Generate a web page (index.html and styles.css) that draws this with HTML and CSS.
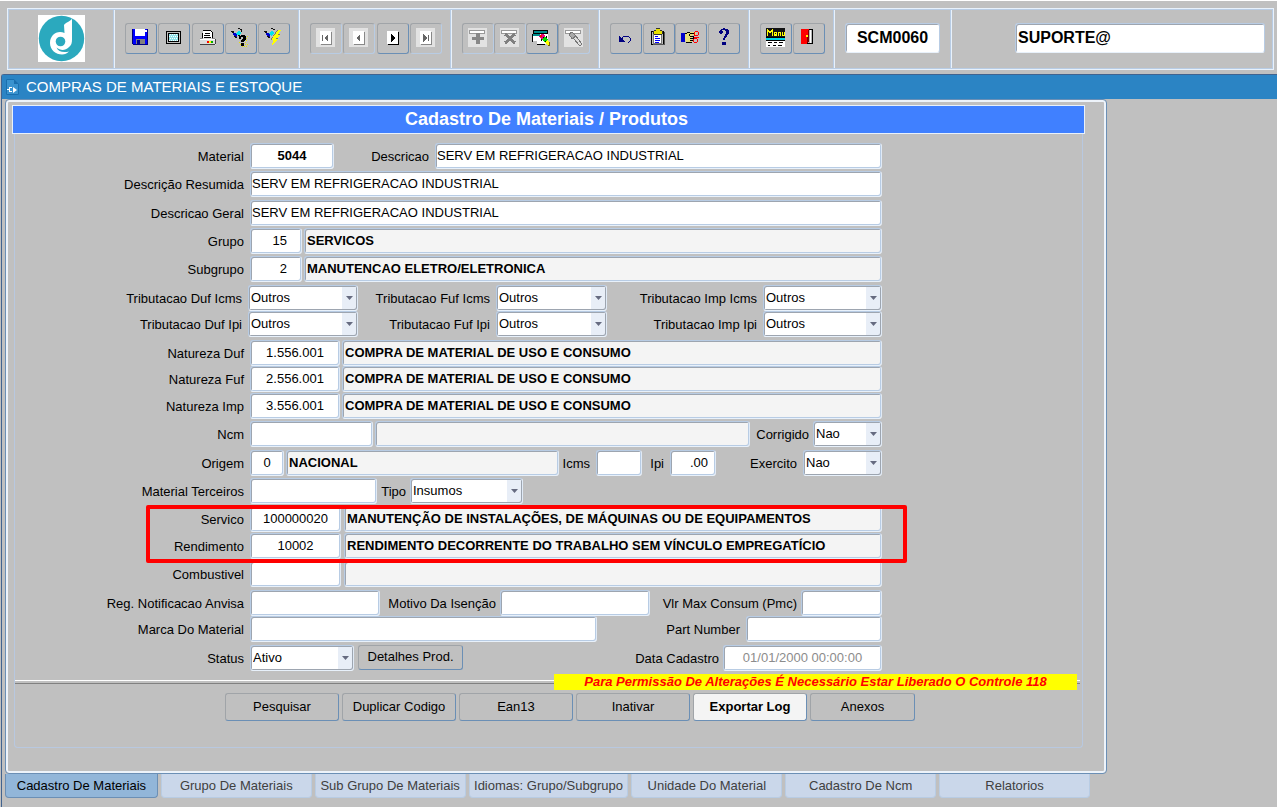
FILE: index.html
```
<!DOCTYPE html>
<html lang="pt-BR">
<head>
<meta charset="utf-8">
<title>Compras de Materiais e Estoque</title>
<link rel="stylesheet" href="styles.css">
</head>
<body>
<header class="toolbar">
  <div class="tool-group tool-group--logo">
    <svg class="logo" viewBox="0 0 47 47" role="img" aria-label="Logo">
      <rect width="47" height="47" fill="#fff"/>
      <circle cx="23.500" cy="23.500" r="22.700" fill="#2ba9be"/>
      <path d="M34 3.500C32 7 28 7 26 10l.500 8C19 15 12 20 12 28c0 7 6 11.500 12 11.500 3 0 5-1 7-3-6 1.500-11 0-12.500-4 4 3.500 9 3 12 0 3-2 3.500-5 3.500-8z" fill="#fff"/>
      <circle cx="22.500" cy="26.500" r="4.800" fill="#2ba9be"/>
    </svg>
  </div>
  <div class="tool-group tool-group--main">
    <button class="tool" type="button" aria-label="Salvar"><svg viewBox="0 0 20 20"><path d="M1 1h16v16H2l-1-1z" fill="#00f"/><path d="M1 1h1v15H1zM16 1h1v16h-1zM2 16h15v1H2z" fill="#000080"/><path d="M4 1h10v7H4z" fill="#fff"/><path d="M5 11h9v5H5z" fill="#808080"/><path d="M6 12h3v4H6z" fill="#000090"/><path d="M14 2h2v2h-2z" fill="#fff"/></svg></button>
    <button class="tool" type="button" aria-label="Tela"><svg viewBox="0 0 20 20"><rect x="2.500" y="3.500" width="14" height="12" rx="1" fill="#c0c0c0" stroke="#000"/><rect x="4.500" y="5.500" width="10" height="8" fill="#c0c0c0" stroke="#000"/><path d="M5 6h9v7H5z" fill="#8fe3ea"/><path d="M6 6.500h1m1 0h1m1 0h1m1 0h1M5 8.500h1m1 0h1m1 0h1m1 0h1m1 0h1M6 10.500h1m1 0h1m1 0h1m1 0h1M5 12.500h1m1 0h1m1 0h1m1 0h1m1 0h1" stroke="#fff"/></svg></button>
    <button class="tool" type="button" aria-label="Imprimir"><svg viewBox="0 0 20 20"><path d="M5 3h9l1 2v6H5z" fill="#fff"/><path d="M4 5h1v6H4zM5 2h8v1H5zM13 3h1v1h-1zM14 4h1v7h-1z"/><path d="M7 5h5v1H7zM6 7h6v1H6zM6 9h7v1H6z"/><path d="M3 10h14v1h1v6H2v-6h1z" fill="#ddd"/><path d="M2 10h3v1H2zM14 10h3v1h-3z" fill="#888"/><path d="M2 11h15v1H2z" fill="#fff"/><path d="M2 16h15v1H2zM17 11h1v5h-1z" fill="#444"/><path d="M9 13h2v2H9z" fill="#f00"/><path d="M11 13h2v2h-2z" fill="#ff0"/><path d="M13 13h2v2h-2z" fill="#0a0"/></svg></button>
    <button class="tool" type="button" aria-label="Entrar consulta"><svg viewBox="0 0 20 20"><path d="M1 4h1l4 2v4H5L3 8z" fill="#00c"/><path d="M5 5l3-3 2 3-3 3z" fill="#00e5ee"/><path d="M0 3h3v1H0zM1 4h2v1H1zM3 8h2v1H3zM4 9h2v1H4zM7 0h2v1H7zM9 1h2v1H9zM10 2h1v2h-1zM7 7h2v1H7z" fill="#111"/><path d="M10 8.500h1m1 0h1m1 0h1m1 0h1M9 10.500h1m5 0h1M10 12.500h1m4 0h1M8 14.500h1m5 0h1M9 16.500h1m4 0h1m1 0h1M11 18.500h1m1 0h1m1 0h1" stroke="#e8e200"/><path d="M8 8h2V7h4v1h1v4h-1v1h-1v1h-3v-2h1v-1h1V9h-2v2H8zM10 15h3v3h-3z"/></svg></button>
    <button class="tool" type="button" aria-label="Executar consulta"><svg viewBox="0 0 20 20"><path d="M1 4h1l4 2v4H5L3 8z" fill="#00c"/><path d="M5 5l3-3 2 3-3 3z" fill="#00e5ee"/><path d="M0 3h3v1H0zM1 4h2v1H1zM3 8h2v1H3zM4 9h2v1H4zM7 0h2v1H7zM9 1h2v1H9z" fill="#111"/><path d="M13 2h4l-3 5h2l-4 4h2l-6 7 1-6H7l2-4h1z" fill="#ff0"/><path d="M13 2h1l-4 6H9zM8 9h1l-1 3H7zM14 6h2v1h-2zM12 10h2v1h-2z" fill="#777"/></svg></button>
  </div>
  <div class="tool-group tool-group--nav">
    <button class="tool tool--off" type="button" disabled aria-label="Primeiro"><svg viewBox="0 0 20 20"><path d="M0 0h19v19H0z" fill="#e2e2e2"/><path d="M5 4h11v13H5z" fill="#888"/><path d="M4 3h11v13H4z" fill="#fff"/><path d="M6 7h1v6H6zM12 6v8L8 10z" fill="#666"/></svg></button>
    <button class="tool tool--off" type="button" disabled aria-label="Anterior"><svg viewBox="0 0 20 20"><path d="M0 0h19v19H0z" fill="#e2e2e2"/><path d="M5 4h11v13H5z" fill="#888"/><path d="M4 3h11v13H4z" fill="#fff"/><path d="M11 6v8l-4-4z" fill="#666"/></svg></button>
    <button class="tool" type="button" aria-label="Próximo"><svg viewBox="0 0 20 20"><path d="M5 4h11v13H5z"/><path d="M4 3h11v13H4z" fill="#fff"/><path d="M8 5v9l4-4z"/></svg></button>
    <button class="tool tool--off" type="button" disabled aria-label="Último"><svg viewBox="0 0 20 20"><path d="M0 0h19v19H0z" fill="#e2e2e2"/><path d="M5 4h11v13H5z" fill="#888"/><path d="M4 3h11v13H4z" fill="#fff"/><path d="M7 6v8l4-4zM12 7h1v6h-1z" fill="#666"/></svg></button>
  </div>
  <div class="tool-group tool-group--edit">
    <button class="tool tool--off" type="button" disabled aria-label="Inserir"><svg viewBox="0 0 20 20"><path d="M0 0h19v19H0z" fill="#e2e2e2"/><path d="M1.500 2.500h15v3h-15z" fill="#fff" stroke="#999"/><path d="M8 5h4v4h4v3h-4v4H8v-4H4V9h4z" fill="#888"/></svg></button>
    <button class="tool tool--off" type="button" disabled aria-label="Remover"><svg viewBox="0 0 20 20"><path d="M0 0h19v19H0z" fill="#e2e2e2"/><path d="M1.500 2.500h15v3h-15z" fill="#fff" stroke="#999"/><path d="M5 6l10 9M15 6L5 15" stroke="#808080" stroke-width="3"/></svg></button>
    <button class="tool" type="button" aria-label="Limpar consulta"><svg viewBox="0 0 20 20"><path d="M2 3h14v13H5v-3H1V6h1z" fill="#fff"/><path d="M1 2h15v1H1zM1 3h1v2H1zM15 3h1v3h-1zM1 5h15v1H1zM0 6h1v8H0zM14 8h1v4h-1zM5 16h8v1H5z"/><path d="M2 3h13v2H2zM1 6h7v2H1z" fill="#008b8b"/><path d="M6 8h3V6h3l2 4-3 3-3-3z" fill="#e6007e"/><path d="M8 7h2v2H8z" fill="#f00"/><path d="M10 12l3-4 3 4-3 2z" fill="#0d0"/><path d="M9 11h1v2H9zM11 9h1v1h-1zM13 13h2v1h-2z"/><path d="M13 14l3-2 2 5h-3z" fill="#ff0"/><path d="M17 14h1v4h-2v-1h1z" fill="#776600"/></svg></button>
    <button class="tool tool--off" type="button" disabled aria-label="Limpar"><svg viewBox="0 0 20 20"><path d="M0 0h19v19H0z" fill="#e2e2e2"/><path d="M1.500 2.500h15v3h-15z" fill="#fff" stroke="#999"/><path d="M5 6l3-2 4 4-4 3z" fill="#aaa" stroke="#777"/><path d="M9 10l3-2 6 8-2 2z" fill="#ddd" stroke="#777"/></svg></button>
  </div>
  <div class="tool-group tool-group--help">
    <button class="tool" type="button" aria-label="Desfazer"><svg viewBox="0 0 20 20"><path d="M5 12l2-3 2-1h3l2 2v3l-2 2" fill="none" stroke="#000080"/><path d="M3 8v6h6z" fill="#000080"/></svg></button>
    <button class="tool" type="button" aria-label="Colar"><svg viewBox="0 0 20 20"><path d="M2.500 3.500h12v13h-12z" fill="#c0c0c0" stroke="#000"/><path d="M15 4h1v13H4v-1h11z" fill="#555"/><path d="M4.500 5.500h8v10h-8z" fill="#fff" stroke="#777"/><path d="M5 3h2V1h4v2h2v3H5z" fill="#e8e000"/><path d="M4 3h1v3H4zM5 2h2v1H5zM7 0h4v1H7zM11 2h2v1h-2zM13 3h1v3h-1zM5 6h8v1H5z" fill="#333"/><path d="M6 8h3v1H6zM6 10h5v1H6zM6 12h5v1H6zM6 14h4v1H6z" fill="#00f"/></svg></button>
    <button class="tool" type="button" aria-label="Lista de valores"><svg viewBox="0 0 20 20"><path d="M0 5h4v9H0z" fill="#00c"/><path d="M4 6l3-2h8v3h-4v8H6l-2-2z" fill="#e8df7a"/><path d="M4 5h2v1H4zM6 4h3v1H6zM9 5h5v1H9zM9 8h4v1H9zM9 10h3v1H9zM9 12h3v1H9zM5 14h6v1H5zM12 9h1v4h-1zM8 6h1v2H8z"/><circle cx="15.500" cy="5.500" r="2" fill="none" stroke="#f00"/><circle cx="14.500" cy="12.500" r="2" fill="none" stroke="#f00"/><path d="M13 7h3v1h-3zM13 9h5v1h-5z" fill="#f00"/></svg></button>
    <button class="tool" type="button" aria-label="Ajuda"><svg viewBox="0 0 20 20"><path d="M5 5c0-6 10-6 10-1 0 4-4 4-4 8H9c0-4 3-4 3-8 0-2-3-3-4-1l1 1-1 2H6zM8 14h4v3H8z" fill="#000080"/></svg></button>
  </div>
  <div class="tool-group tool-group--exit">
    <button class="tool" type="button" aria-label="Menu"><svg viewBox="0 0 20 20"><path d="M0 0h19v9H0z" fill="#111"/><path d="M1.500 8V1.500L4 5l2.500-3.500V8M11 6H8.500V4.500h2V6M8.500 4v3.500H11M12.500 8V4.500h2V8M16.500 4v3.500h2V4" fill="none" stroke="#ff0"/><path d="M0 10h19v2H0z" fill="#00d8e8"/><path d="M0 9h19v1H0zM0 12h19v1H0z"/><path d="M0 13h19v6H0z" fill="#fff"/><path d="M2 14h4v1H2zM8 14h3v1H8zM13 14h4v1h-4zM2 17h2v1H2zM7 17h3v1H7zM12 17h4v1h-4z"/></svg></button>
    <button class="tool" type="button" aria-label="Sair"><svg viewBox="0 0 20 20"><path d="M2.500 1.500h11v14h-11z" fill="#b8b8b8" stroke="#000"/><path d="M2 1h8v12l-3 3H2z" fill="#f00"/><path d="M9 2h1v11l-2 2v-2z" fill="#800000"/><path d="M7 7h2v2H7z" fill="#ff0"/><path d="M11 2h1v13h-1z" fill="#fff"/></svg></button>
  </div>
  <div class="tool-group tool-group--code"><input class="session" aria-label="Programa" value="SCM0060"></div>
  <div class="tool-group tool-group--user"><input class="session session--user" aria-label="Usuário" value="SUPORTE@"></div>
</header>

<main class="window">
  <h1 class="titlebar">
    <svg class="title-icon" viewBox="0 0 13 16" aria-hidden="true"><path d="M0 0h8l5 5v11H0z" fill="#3a93cf"/><path d="M.500.500H8M.500.500v15h12V5" fill="none" stroke="#1a6fae"/><path d="M8 0v5h5z" fill="#1a6fae"/><path d="M1 10h2V8h3v1H4v3h2v1H3v-2H1zM7 8l4 3-4 3z" fill="#fff"/></svg>
    COMPRAS DE MATERIAIS E ESTOQUE
  </h1>

  <section class="panel">
    <h2 class="banner">Cadastro De Materiais / Produtos</h2>
    <form class="form">
      <div class="rows">
        <div class="row">
          <label class="lead" for="material">Material</label><input class="field w84 strong center" id="material" value="5044">
          <label class="label w101" for="descricao">Descricao</label><input class="field grow" id="descricao" value="SERV EM REFRIGERACAO INDUSTRIAL">
        </div>
        <div class="row row--roomy">
          <label class="lead" for="resumida">Descrição Resumida</label><input class="field grow" id="resumida" value="SERV EM REFRIGERACAO INDUSTRIAL">
        </div>
        <div class="row">
          <label class="lead" for="geral">Descricao Geral</label><input class="field grow" id="geral" value="SERV EM REFRIGERACAO INDUSTRIAL">
        </div>
        <div class="row">
          <label class="lead" for="grupo">Grupo</label><div class="pair"><input class="field w52 right" id="grupo" value="15"><input class="field grow fixed" aria-label="Nome do grupo" readonly value="SERVICOS"></div>
        </div>
        <div class="row row--roomy">
          <label class="lead" for="subgrupo">Subgrupo</label><div class="pair"><input class="field w52 right" id="subgrupo" value="2"><input class="field grow fixed" aria-label="Nome do subgrupo" readonly value="MANUTENCAO ELETRO/ELETRONICA"></div>
        </div>
        <div class="row row--tight">
          <label class="lead lead--taxes" for="duf-icms">Tributacao Duf Icms</label><select class="field select w110" id="duf-icms"><option>Outros</option></select>
          <label class="label grow" for="fuf-icms">Tributacao Fuf Icms</label><select class="field select w111" id="fuf-icms"><option>Outros</option></select>
          <label class="label w156" for="imp-icms">Tributacao Imp Icms</label><select class="field select w119" id="imp-icms"><option>Outros</option></select>
        </div>
        <div class="row row--roomy">
          <label class="lead lead--taxes" for="duf-ipi">Tributacao Duf Ipi</label><select class="field select w110" id="duf-ipi"><option>Outros</option></select>
          <label class="label grow" for="fuf-ipi">Tributacao Fuf Ipi</label><select class="field select w111" id="fuf-ipi"><option>Outros</option></select>
          <label class="label w156" for="imp-ipi">Tributacao Imp Ipi</label><select class="field select w119" id="imp-ipi"><option>Outros</option></select>
        </div>
        <div class="row row--tight">
          <label class="lead" for="nat-duf">Natureza Duf</label><div class="pair"><input class="field w90 center" id="nat-duf" value="1.556.001"><input class="field grow fixed" aria-label="Descrição Duf" readonly value="COMPRA DE MATERIAL DE USO E CONSUMO"></div>
        </div>
        <div class="row row--snug">
          <label class="lead" for="nat-fuf">Natureza Fuf</label><div class="pair"><input class="field w90 center" id="nat-fuf" value="2.556.001"><input class="field grow fixed" aria-label="Descrição Fuf" readonly value="COMPRA DE MATERIAL DE USO E CONSUMO"></div>
        </div>
        <div class="row">
          <label class="lead" for="nat-imp">Natureza Imp</label><div class="pair"><input class="field w90 center" id="nat-imp" value="3.556.001"><input class="field grow fixed" aria-label="Descrição Imp" readonly value="COMPRA DE MATERIAL DE USO E CONSUMO"></div>
        </div>
        <div class="row row--roomy">
          <label class="lead" for="ncm">Ncm</label><div class="pair"><input class="field w123" id="ncm"><input class="field grow fixed" aria-label="Descrição Ncm" readonly></div>
          <label class="label label--close w63" for="corrigido">Corrigido</label><select class="field select w69" id="corrigido"><option>Nao</option></select>
        </div>
        <div class="row">
          <label class="lead" for="origem">Origem</label><div class="pair"><input class="field w34 center" id="origem" value="0"><input class="field grow fixed" aria-label="Nome da origem" readonly value="NACIONAL"></div>
          <label class="label w37" for="icms">Icms</label><input class="field w46" id="icms">
          <label class="label w28" for="ipi">Ipi</label><input class="field w46 right right--near" id="ipi" value=".00">
          <label class="label w87" for="exercito">Exercito</label><select class="field select w79" id="exercito"><option>Nao</option></select>
        </div>
        <div class="row">
          <label class="lead" for="terceiros">Material Terceiros</label><input class="field w127" id="terceiros">
          <label class="label label--close w33" for="tipo">Tipo</label><select class="field select w113" id="tipo"><option>Insumos</option></select>
        </div>
        <div class="highlight">
          <div class="row row--snug">
            <label class="lead" for="servico">Servico</label><div class="pair pair--wide"><input class="field w91 center" id="servico" value="100000020"><input class="field grow fixed" aria-label="Descrição do serviço" readonly value="MANUTENÇÃO DE INSTALAÇÕES, DE MÁQUINAS OU DE EQUIPAMENTOS"></div>
          </div>
          <div class="row">
            <label class="lead" for="rendimento">Rendimento</label><div class="pair pair--wide"><input class="field w91 center" id="rendimento" value="10002"><input class="field grow fixed" aria-label="Descrição do rendimento" readonly value="RENDIMENTO DECORRENTE DO TRABALHO SEM VÍNCULO EMPREGATÍCIO"></div>
          </div>
        </div>
        <div class="row row--roomy">
          <label class="lead" for="combustivel">Combustivel</label><div class="pair pair--wide"><input class="field w91" id="combustivel"><input class="field grow fixed" aria-label="Descrição do combustível" readonly></div>
        </div>
        <div class="row row--tight">
          <label class="lead" for="anvisa">Reg. Notificacao Anvisa</label><input class="field w130" id="anvisa">
          <label class="label label--close w120" for="isencao">Motivo Da Isenção</label><input class="field grow" id="isencao">
          <label class="label label--close w151" for="pmc">Vlr Max Consum (Pmc)</label><input class="field w81" id="pmc">
        </div>
        <div class="row row--roomy">
          <label class="lead" for="marca">Marca Do Material</label><input class="field grow" id="marca">
          <label class="label w149" for="part">Part Number</label><input class="field w136" id="part">
        </div>
        <div class="row row--tight">
          <label class="lead" for="status">Status</label><select class="field select w104" id="status"><option>Ativo</option></select>
          <button class="button button--inline" type="button">Detalhes Prod.</button>
          <label class="label label--close grow" for="data">Data Cadastro</label><input class="field w159 center" id="data" disabled value="01/01/2000 00:00:00">
        </div>
      </div>

      <div class="notice"><strong class="notice-text">Para Permissão De Alterações É Necessário Estar Liberado O Controle 118</strong></div>

      <div class="actions">
        <button class="button" type="button">Pesquisar</button>
        <button class="button" type="button">Duplicar Codigo</button>
        <button class="button" type="button">Ean13</button>
        <button class="button" type="button">Inativar</button>
        <button class="button button--primary" type="button">Exportar Log</button>
        <button class="button button--last" type="button">Anexos</button>
      </div>
    </form>
  </section>

  <nav class="tabs">
    <button class="tab tab--active" type="button">Cadastro De Materiais</button>
    <button class="tab" type="button">Grupo De Materiais</button>
    <button class="tab" type="button">Sub Grupo De Materiais</button>
    <button class="tab tab--wide" type="button">Idiomas: Grupo/Subgrupo</button>
    <button class="tab" type="button">Unidade Do Material</button>
    <button class="tab" type="button">Cadastro De Ncm</button>
    <button class="tab" type="button">Relatorios</button>
  </nav>
</main>
</body>
</html>
```
FILE: styles.css
```
* { box-sizing: border-box; }

body {
  margin: 0;
  min-height: 100vh;
  display: flex;
  flex-direction: column;
  background: #c0c0c0;
  border-top: 1px solid #fff;
  color: #000;
  font: 13px/16px "Liberation Sans", Arial, sans-serif;
}

input, select, button { font: inherit; color: inherit; }

/* Toolbar */
.toolbar {
  display: flex;
  height: 62px;
  margin: 7px 3px 4px 7px;
  border: 1px solid #e8f1fb;
  outline: 1px solid #b8cce4;
  outline-offset: -2px;
}
.tool-group {
  flex: none;
  display: flex;
  align-items: center;
  justify-content: space-between;
  padding: 0 9px 2px 10px;
  border-right: 1px solid #e8f1fb;
  box-shadow: inset -1px 0 #b8cce4;
}
.tool-group--logo { width: 107px; padding-right: 10px; justify-content: center; }
.tool-group--main { width: 185px; }
.tool-group--nav { width: 152px; }
.tool-group--edit { width: 148px; }
.tool-group--help { width: 150px; }
.tool-group--exit { width: 85px; }
.tool-group--code { width: 117px; padding-right: 11px; }
.tool-group--user {
  flex: 1;
  border: 0;
  box-shadow: none;
  padding-left: 63px;
  padding-right: 8px;
}
.logo { width: 47px; height: 47px; }
.tool {
  width: 32px;
  height: 31px;
  padding: 0 0 1px;
  display: flex;
  align-items: center;
  justify-content: center;
  background: #c0c0c0;
  border: 1px solid #a0a4a8;
  border-right-color: #6b8fb5;
  border-bottom-color: #6b8fb5;
  border-radius: 3px;
}
.tool svg { width: 20px; height: 20px; shape-rendering: crispEdges; }
.tool--off { border-right-color: #b8cce4; border-bottom-color: #b8cce4; }
.session {
  width: 100%;
  min-width: 0;
  height: 30px;
  padding: 0 2px;
  background: #fff;
  border: 1px solid #b8cce4;
  border-bottom-color: #e8f1fb;
  border-radius: 3px;
  box-shadow: inset 1px 1px #9da5b0;
  font-size: 16px;
  font-weight: bold;
  text-align: center;
}
.session--user { text-align: left; }

/* Window frame */
.window {
  flex: 1;
  margin-left: 1px;
  border-left: 1px solid #41638f;
  border-top: 1px solid #41638f;
  border-radius: 3px 0 0 0;
}
.titlebar {
  display: flex;
  align-items: center;
  gap: 7px;
  height: 24px;
  margin: 0;
  padding-left: 4px;
  background: #2b84c4;
  color: #fff;
  font-size: 15px;
  font-weight: normal;
}
.title-icon { width: 13px; height: 16px; }
.panel {
  margin: 0 170px 0 3px;
  padding: 3px 0 25px;
  border: 1px solid #6b8fb5;
  border-radius: 4px;
  box-shadow: inset 0 0 0 2px #edf3fa;
}
.banner {
  height: 29px;
  margin: 2px 21px 0 6px;
  padding-right: 4px;
  border: 1px solid #e8f1fb;
  background: #4080ff;
  color: #fff;
  font-size: 18px;
  line-height: 27px;
  text-align: center;
}

/* Form */
.form {
  margin: 0 23px 0 8px;
  padding: 9px 0 26px;
  border: 1px solid #b8c8e0;
  border-top: 0;
  border-radius: 0 0 4px 4px;
}
.rows { padding-right: 200px; }
.row { display: flex; align-items: flex-start; height: 28px; }
.row--tight { height: 26px; }
.row--snug { height: 27px; }
.row--roomy { height: 29px; }
.lead, .label {
  flex: none;
  padding: 6px 6px 0 0;
  text-align: right;
  white-space: nowrap;
}
.lead { width: 235px; }
.lead--taxes { width: 233px; }
.label--close { padding-right: 4px; }
.pair { flex: 1; min-width: 0; display: flex; gap: 2px; }
.pair--wide { gap: 3px; }
.field {
  flex: none;
  height: 26px;
  min-width: 0;
  margin: 0;
  padding: 0 1px 1px;
  background: #fff;
  border: 1px solid #b8cce4;
  border-right-color: #e0eaf6;
  border-bottom-color: #e8f1fb;
  border-radius: 3px;
  box-shadow: inset 1px 1px #9da5b0, inset -1px -1px #b8cce4;
  outline: 0;
}
.field:disabled { color: #8c8c8c; }
.grow { flex: 1; min-width: 0; }
.fixed { background: #f4f4f4; padding-left: 2px; font-weight: bold; }
.strong { font-weight: bold; }
.center { text-align: center; }
.right { padding-right: 14px; text-align: right; }
.right--near { padding-right: 7px; }
.select {
  appearance: none;
  padding-left: 2px;
  background: #fff url("data:image/svg+xml,%3Csvg xmlns='http://www.w3.org/2000/svg' width='15' height='24'%3E%3Cpath d='M0 0h15v24H0z' fill='%23e8eef7'/%3E%3Cpath d='M4 10h7l-3.500 4z' fill='%23666b80'/%3E%3C/svg%3E") no-repeat right center;
  box-shadow: inset 1px 1px #9da5b0, inset -1px -1px #9da5b0;
}

/* Control widths */
.w28 { width: 28px; }
.w33 { width: 33px; }
.w34 { width: 34px; }
.w37 { width: 37px; }
.w46 { width: 46px; }
.w52 { width: 52px; }
.w63 { width: 63px; }
.w69 { width: 69px; }
.w79 { width: 79px; }
.w81 { width: 81px; }
.w84 { width: 84px; }
.w87 { width: 87px; }
.w90 { width: 90px; }
.w91 { width: 91px; }
.w101 { width: 101px; }
.w104 { width: 104px; }
.w110 { width: 110px; }
.w111 { width: 111px; }
.w113 { width: 113px; }
.w119 { width: 119px; }
.w120 { width: 120px; }
.w123 { width: 123px; }
.w127 { width: 127px; }
.w130 { width: 130px; }
.w136 { width: 136px; }
.w149 { width: 149px; }
.w151 { width: 151px; }
.w156 { width: 156px; }
.w159 { width: 159px; }

/* Marker frame over the service rows */
.highlight { position: relative; }
.highlight::after {
  content: "";
  position: absolute;
  inset: -1px -25px -2px 131px;
  border: 4px solid #f00;
  border-radius: 2px;
  pointer-events: none;
}

.notice { display: flex; height: 16px; margin: 3px 2px 0 0; }
.notice::before, .notice::after {
  content: "";
  height: 2px;
  margin-top: 6px;
  border-top: 1px solid #fff;
  border-bottom: 1px solid #808080;
}
.notice::before { flex: 1; }
.notice::after { width: 3px; }
.notice-text {
  width: 523px;
  background: #ff0;
  color: #f00;
  font-style: italic;
  text-align: center;
  white-space: nowrap;
}

.button {
  flex: none;
  width: 114px;
  height: 28px;
  padding: 0 0 1px;
  background: #c0c0c0;
  border: 1px solid #a0a4a8;
  border-right-color: #6b8fb5;
  border-bottom-color: #6b8fb5;
  border-radius: 3px;
}
.button--inline { width: 105px; height: 25px; margin-left: 4px; }
.button--primary { background: #f4f4f4; font-weight: bold; }
.button--last { width: 105px; }
.actions { display: flex; gap: 3px; margin-top: 3px; padding-left: 210px; }

/* Bottom tabs */
.tabs { display: flex; gap: 3px; margin: 0 187px 0 3px; }
.tab {
  flex: 151 1 0;
  height: 24px;
  padding: 0;
  background: #cad7ea;
  border: 1px solid #b8cce4;
  border-top: 0;
  border-radius: 0 0 4px 4px;
  color: #404040;
  white-space: nowrap;
}
.tab--wide { flex-grow: 160; }
.tab--active { flex-grow: 153; background: #92b6d9; border-color: #6b8fb5; color: #000; }
```
